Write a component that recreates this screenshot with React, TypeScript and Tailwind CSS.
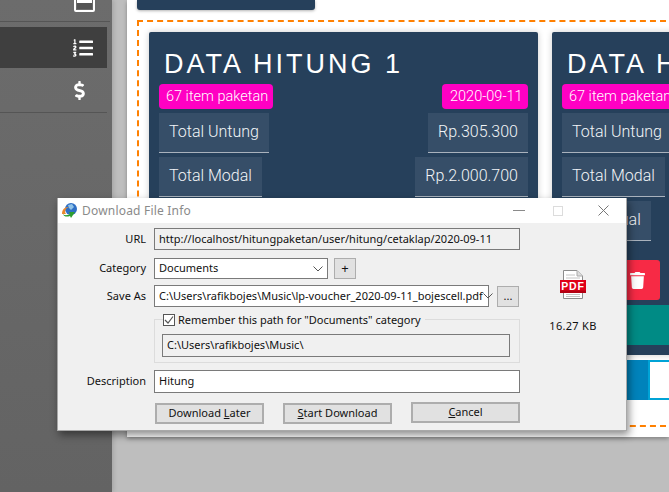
import { FaListOl, FaDollarSign, FaTrash } from "react-icons/fa";

const rows = [
  ["Total Untung", "Rp.305.300"],
  ["Total Modal", "Rp.2.000.700"],
  ["Total Jual", "Rp.2.306.000"],
];

function Card({ n, w }: { n: number; w: string }) {
  return (
    <div className={`${w} shrink-0 h-[323px] bg-[#26405b] rounded-[2px] px-[10px] shadow-[0_0_6px_rgba(0,0,0,0.2)]`}>
      <div className="pl-[5px] pt-[15px] h-[52px] text-white text-[27px] leading-[34px] tracking-[3px] font-['Liberation_Sans_Narrow',sans-serif] whitespace-nowrap">
        DATA HITUNG {n}
      </div>
      <div className="flex justify-between">
        <span className="h-[25px] w-[114px] rounded-[4px] bg-[#ff00c3] text-white text-[14.5px] font-light leading-[25px] pl-[7px] whitespace-nowrap">67 item paketan</span>
        <span className="h-[25px] w-[86px] rounded-[4px] bg-[#ff00c3] text-white text-[14.5px] font-light leading-[25px] pl-[8px] whitespace-nowrap">2020-09-11</span>
      </div>
      <div className="flex flex-col gap-[4px] mt-[4px]">
        {rows.map(([a, b]) => (
          <div key={a} className="flex justify-between">
            <span className="h-[40px] bg-[#364e68] border-b border-[#a9b2bd] px-[10px] text-[#f2f5f7] text-[16px] font-light leading-[38px] whitespace-nowrap">{a}</span>
            <span className="h-[40px] bg-[#364e68] border-b border-[#a9b2bd] px-[10px] text-[#f2f5f7] text-[16px] font-light leading-[38px] whitespace-nowrap">{b}</span>
          </div>
        ))}
      </div>
      <div className="flex justify-start mt-[19px] gap-[2px]">
        <div className="w-[50px] h-[40px]" />
        <div className="w-[46px] h-[40px] bg-[#f72a45] rounded-[3px] flex items-center justify-center text-white">
          <FaTrash size={17} />
        </div>
      </div>
      <div className="h-[40px] mt-[5px] bg-[#008b85]" />
    </div>
  );
}

function Globe() {
  return (
    <svg width="18" height="15" viewBox="0 0 18 15">
      <circle cx="10" cy="6" r="6" fill="#2f6fc4" />
      <path d="M7 2 L11 1 L13 4 L10 7 L8 5 Z" fill="#8fc2e8" />
      <path d="M1 11 C1 5 5 4 8 4 C5 5 3 8 5 11 Z" fill="#e9872b" />
      <path d="M2 11 C4 13 7 12 9 11 L8 9 L14 9 L10 15 L9 13 C6 14 3 14 2 11 Z" fill="#2f9e2f" />
    </svg>
  );
}

function PdfIcon() {
  return (
    <svg width="26" height="30" viewBox="0 0 26 30">
      <path d="M3.5 0.5 H17 L22.5 6 V28.5 H3.5 Z" fill="#fff" stroke="#8c8c8c" />
      <path d="M17 0.5 V6 H22.5" fill="#ddd" stroke="#aaa" />
      <path d="M6 5H15M6 8H20M6 24.5H20M6 26.5H20" stroke="#c4c4c4" />
      <rect x="0" y="10" width="26" height="13" fill="#df0018" />
      <rect x="0" y="20.5" width="26" height="2.5" fill="#b30012" />
      <text x="13" y="20" textAnchor="middle" fill="#fff" fontSize="10.5" fontWeight="700" letterSpacing="0.8" fontFamily="Liberation Sans, sans-serif">PDF</text>
    </svg>
  );
}

function Chevron() {
  return (
    <svg width="10" height="6" viewBox="0 0 10 6" className="shrink-0">
      <path d="M0.5 0.5 L5 5 L9.5 0.5" fill="none" stroke="#555" />
    </svg>
  );
}

const inputBase = "border border-[#7a7a7a] flex items-center pl-[4px] whitespace-nowrap";
const btn = "h-[21px] w-[109px] border-2 border-[#adadad] bg-[#e1e1e1] flex items-center justify-center";

function Dialog() {
  return (
    <div className="absolute left-[57px] top-[198px] w-[570px] h-[233px] bg-[#f0f0f0] border border-[#a8a8a8] border-t-0 shadow-[2px_4px_8px_rgba(0,0,0,0.45)] text-[11px] text-[#111] font-['Noto_Sans',sans-serif] flex flex-col">
      <div className="h-[25px] bg-white flex items-center shrink-0">
        <div className="ml-[3px] mr-[3px] w-[18px] flex">
          <Globe />
        </div>
        <span className="text-[#8a8a8a] text-[12px] tracking-[0.2px]">Download File Info</span>
        <div className="ml-auto flex items-center">
          <div className="w-[12px] h-px bg-[#8a8a8a]" />
          <div className="w-[10px] h-[10px] border border-[#dcdcdc] ml-[28px]" />
          <svg width="11" height="11" viewBox="0 0 11 11" className="ml-[35px] mr-[17px]">
            <path d="M0.5 0.5 L10.5 10.5 M10.5 0.5 L0.5 10.5" stroke="#777" />
          </svg>
        </div>
      </div>
      <div className="flex flex-1">
        <div className="w-[462px] shrink-0">
          <div className="flex items-center mt-[5px]">
            <span className="w-[88px] text-right">URL</span>
            <div className={`${inputBase} ml-[8px] w-[366px] h-[22px]`}>http://localhost/hitungpaketan/user/hitung/cetaklap/2020-09-11</div>
          </div>
          <div className="flex items-center mt-[8px]">
            <span className="w-[88px] text-right">Category</span>
            <div className={`${inputBase} ml-[8px] w-[174px] h-[21px] bg-white justify-between pr-[4px]`}>
              Documents
              <Chevron />
            </div>
            <div className="ml-[6px] w-[22px] h-[21px] border border-[#adadad] bg-[#e1e1e1] flex items-center justify-center text-[13px]">+</div>
          </div>
          <div className="flex items-center mt-[6px]">
            <span className="w-[88px] text-right">Save As</span>
            <div className={`${inputBase} ml-[8px] w-[335px] h-[22px] bg-white justify-between pr-[4px]`}>
              C:\Users\rafikbojes\Music\lp-voucher_2020-09-11_bojescell.pdf
              <Chevron />
            </div>
            <div className="ml-[8px] w-[22px] h-[21px] border border-[#adadad] bg-[#e1e1e1] flex items-center justify-center">...</div>
          </div>
          <div className="relative ml-[96px] mt-[12px] w-[366px] h-[44px] border border-[#dcdcdc] px-[7px] pt-[14px]">
            <div className="absolute left-[8px] -top-[8px] flex items-center bg-[#f0f0f0] pr-[4px]">
              <div className="w-[12px] h-[12px] border border-[#555] bg-white flex items-center justify-center mr-[3px]">
                <svg width="10" height="10" viewBox="0 0 10 10">
                  <path d="M1 5 L4 8 L9 1.5" fill="none" stroke="#555" strokeWidth="1.2" />
                </svg>
              </div>
              <span className="whitespace-nowrap">Remember this path for "Documents" category</span>
            </div>
            <div className={`${inputBase} w-[348px] h-[23px]`}>C:\Users\rafikbojes\Music\</div>
          </div>
          <div className="flex items-center mt-[7px]">
            <span className="w-[88px] text-right">Description</span>
            <div className={`${inputBase} ml-[8px] w-[366px] h-[23px] bg-white`}>Hitung</div>
          </div>
          <div className="flex items-start mt-[9px] ml-[97px]">
            <div className={`${btn} mt-[1px]`}>
              <span>Download <span className="underline">L</span>ater</span>
            </div>
            <div className={`${btn} ml-[19px] mt-[1px]`}>
              <span><span className="underline">S</span>tart Download</span>
            </div>
            <div className={`${btn} ml-[19px]`}>
              <span><span className="underline">C</span>ancel</span>
            </div>
          </div>
        </div>
        <div className="flex-1 flex flex-col items-center pr-[-1px] pt-[47px]">
          <PdfIcon />
          <span className="mt-[18px] tracking-[0.3px]">16.27 KB</span>
        </div>
      </div>
    </div>
  );
}

export default function App() {
  return (
    <div className="relative w-[669px] h-[492px] overflow-hidden flex bg-[#bebebe] font-['Roboto',sans-serif]">
      <aside className="w-[112px] shrink-0 h-full bg-gradient-to-b from-[#6c6c6c] to-[#636363] shadow-[2px_0_4px_rgba(0,0,0,0.12)]">
        <div className="h-[22px] mr-[2px] border-b border-[#555] flex justify-end pr-[15px] items-start">
          <svg width="21" height="12" viewBox="0 0 21 12">
            <path d="M1 -2 V10 Q1 11 2 11 H19 Q20 11 20 10 V-2 Z" fill="none" stroke="#fff" strokeWidth="2" />
            <rect x="3" y="0" width="15" height="3" fill="#fff" />
            <rect x="3" y="3" width="15" height="6" fill="#555" />
          </svg>
        </div>
        <div className="mt-[5px] w-[107px] h-[41px] bg-[#3f3f3f] flex items-center justify-end pr-[14px] text-white">
          <FaListOl size={20} />
        </div>
        <div className="w-[107px] h-[45px] border-b border-[#555] flex items-center justify-end pr-[18px] text-white">
          <FaDollarSign size={19} />
        </div>
      </aside>
      <main className="flex-1 min-w-0 pl-[15px]">
        <div className="h-[437px] bg-white pl-[10px] overflow-hidden shadow-[0_2px_4px_rgba(0,0,0,0.3)]">
          <div className="w-[178px] h-[10px] bg-[#26405b] rounded-b-[3px] shadow-[0_1px_3px_rgba(0,0,0,0.3)]" />
          <div className="mt-[10px] h-[407px] w-[700px] border-2 border-dashed border-[#ff8000] pl-[10px] pt-[10px]">
            <div className="flex gap-[14px]">
              <Card n={1} w="w-[389px]" />
              <Card n={2} w="w-[389px]" />
            </div>
            <div className="flex ml-[414px] mt-[5px] h-[40px]">
              <div className="w-[85px] h-[40px] bg-[#0083bb]" />
              <div className="flex-1 min-w-[40px] h-[40px] border-2 border-[#00a3d6] bg-white" />
            </div>
          </div>
        </div>
      </main>
      <Dialog />
    </div>
  );
}
